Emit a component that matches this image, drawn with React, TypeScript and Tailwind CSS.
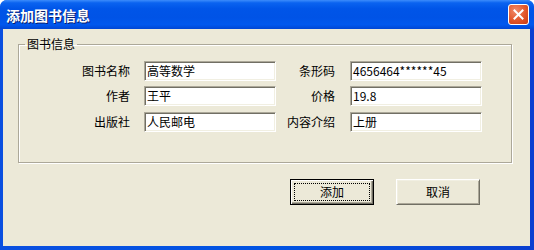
import React from 'react'

const font = { fontFamily: '"Noto Sans CJK SC", "Liberation Sans", sans-serif' }

function Field({ value }: { value: string }) {
  return (
    <div className="w-[132px] h-[20px] bg-white border border-t-[#aca899] border-l-[#aca899] border-b-white border-r-white shadow-[inset_1px_1px_0_#716f64,inset_-1px_-1px_0_#f1efe2] flex items-center pl-[2px] text-[12px] leading-[14px] text-black">
      {value}
    </div>
  )
}

function Row({ l1, v1, l2, v2 }: { l1: string; v1: string; l2: string; v2: string }) {
  return (
    <div className="flex items-center h-[20px]">
      <div className="w-[111px] text-right text-[12px] leading-[14px]">{l1}</div>
      <div className="ml-[14px]"><Field value={v1} /></div>
      <div className="w-[59px] text-right text-[12px] leading-[14px]">{l2}</div>
      <div className="ml-[15px]"><Field value={v2} /></div>
    </div>
  )
}

export default function App() {
  return (
    <div className="w-[534px] h-[250px] flex flex-col bg-[#0054e3] rounded-t-[7px] overflow-hidden" style={font}>
      {/* title bar */}
      <div className="h-[29px] flex items-center justify-between pl-[6px] pr-[5px] bg-[linear-gradient(180deg,#3c8cfb_0%,#0a63f0_10%,#0055e8_30%,#0053e6_60%,#0058ee_85%,#0046d4_100%)]">
        <span className="text-white font-bold text-[14px] leading-[16px] [text-shadow:1px_1px_0_#0a1e6e]">添加图书信息</span>
        <div className="w-[21px] h-[21px] rounded-[3px] border border-white bg-[radial-gradient(circle_at_35%_30%,#f08a6a_0%,#e2562a_55%,#c73a12_100%)] flex items-center justify-center">
          <svg width="11" height="11" viewBox="0 0 11 11">
            <path d="M1.5 1.5 L9.5 9.5 M9.5 1.5 L1.5 9.5" stroke="#fff" strokeWidth="2" strokeLinecap="square" />
          </svg>
        </div>
      </div>

      {/* body */}
      <div className="flex-1 pl-[3px] pr-[4px] pb-[4px] bg-[linear-gradient(90deg,#0a4fe0_0%,#0054e3_50%,#0a3fd0_100%)]">
        <div className="h-full bg-[#ece9d8] flex flex-col">
          <fieldset className="ml-[15px] mt-[8px] w-[494px] h-[126px] border border-[#aca899] shadow-[inset_1px_1px_0_#fff,1px_1px_0_#fff] pt-[10px]">
            <legend className="ml-[6px] px-[2px] text-[12px] leading-[14px] text-black">图书信息</legend>
            <div className="flex flex-col">
              <Row l1="图书名称" v1="高等数学" l2="条形码" v2="4656464******45" />
              <div className="mt-[5px]">
                <Row l1="作者" v1="王平" l2="价格" v2="19.8" />
              </div>
              <div className="mt-[6px]">
                <Row l1="出版社" v1="人民邮电" l2="内容介绍" v2="上册" />
              </div>
            </div>
          </fieldset>

          <div className="flex justify-end pr-[50px] mt-[16px] gap-[22px]">
            <button className="w-[84px] h-[26px] border border-black bg-[#ece9d8] shadow-[inset_1px_1px_0_#fff,inset_-1px_-1px_0_#716f64,inset_-2px_-2px_0_#aca899] p-[3px] flex">
              <span className="flex-1 border border-dotted border-black flex items-center justify-center text-[12px] leading-[14px]">添加</span>
            </button>
            <button className="w-[84px] h-[26px] border border-t-white border-l-white border-b-[#716f64] border-r-[#716f64] bg-[#ece9d8] shadow-[inset_1px_1px_0_#f1efe2,inset_-1px_-1px_0_#aca899] flex items-center justify-center text-[12px] leading-[14px]">
              取消
            </button>
          </div>
        </div>
      </div>
    </div>
  )
}
